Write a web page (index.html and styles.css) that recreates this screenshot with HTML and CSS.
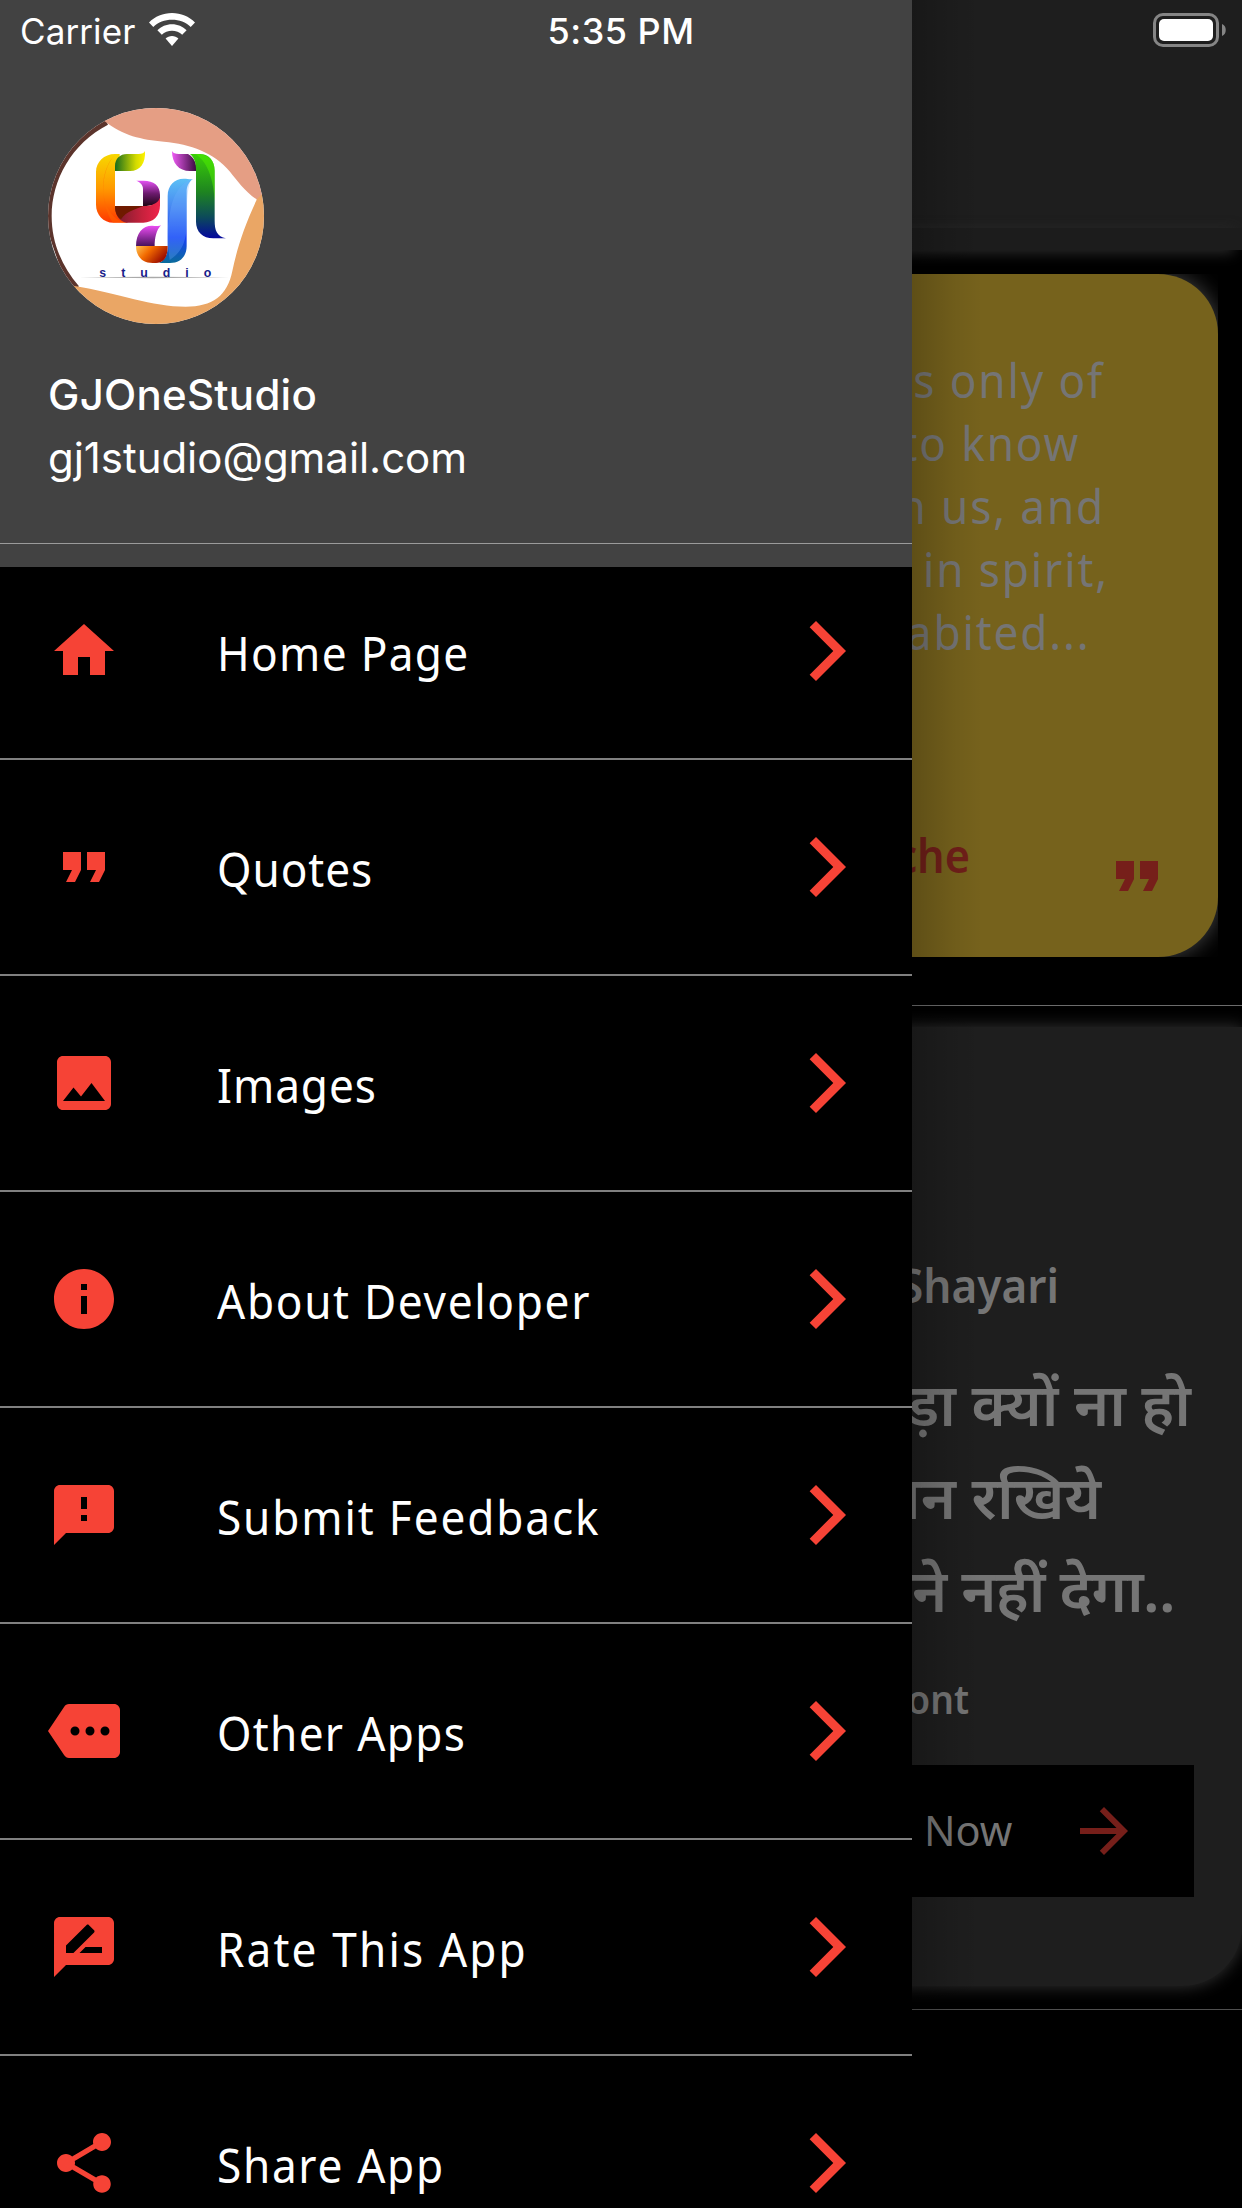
FILE: index.html
```html
<!DOCTYPE html>
<html lang="en">
<head>
<meta charset="utf-8">
<title>GJOneStudio</title>
<link rel="stylesheet" href="styles.css">
</head>
<body>
<svg width="0" height="0" class="defs">
  <symbol id="chevron" viewBox="0 0 24 24"><path d="M5.880 4.120L13.760 12l-7.880 7.880L8 22l10-10L8 2z"/></symbol>
  <symbol id="quote" viewBox="0 0 24 24"><path d="M6 17h3l2-4V7H5v6h3zm8 0h3l2-4V7h-6v6h3z"/></symbol>
</svg>
<div class="screen">
  <div class="status">
    <span class="carrier">Carrier</span>
    <svg class="wifi" viewBox="0 0 46 34"><path d="M23 0C14 0 6 3.500 0 9.500L4.300 14C9.200 9 15.700 6.800 23 6.800S36.800 9 41.700 14L46 9.500C40 3.500 32 0 23 0z"/><path d="M23 11.200c-5.700 0-10.800 2.300-14.600 6l4.400 4.600c2.700-2.600 6.300-4.100 10.200-4.100s7.500 1.500 10.200 4.100l4.400-4.600c-3.800-3.700-8.900-6-14.600-6z"/><path d="M23 23c-2.500 0-4.700 1-6.400 2.500L23 33l6.400-7.500C27.700 24 25.500 23 23 23z"/></svg>
    <span class="time">5:35 PM</span>
    <svg class="battery" viewBox="0 0 74 34"><rect x="1.500" y="1.500" width="63" height="31" rx="8.500" fill="none" stroke="#858585" stroke-width="3"/><rect x="6" y="6" width="54" height="22" rx="5" fill="#fff"/><path d="M69 11c5 1.500 5 10.500 0 12z" fill="#858585"/></svg>
  </div>

  <aside class="drawer">
    <header class="account">
      <svg class="avatar" viewBox="144 324 648 648">
        <defs>
          <clipPath id="disc"><circle cx="468" cy="648" r="324"/></clipPath>
          <linearGradient id="gOrange" x1="0" y1="0" x2="0" y2="1"><stop offset="0" stop-color="#f7d800"/><stop offset=".5" stop-color="#ff9a00"/><stop offset="1" stop-color="#ff3800"/></linearGradient>
          <linearGradient id="gLeaf" x1="0" y1="0" x2="1" y2="0"><stop offset="0" stop-color="#176b1c"/><stop offset=".7" stop-color="#d4db00"/><stop offset="1" stop-color="#fff200"/></linearGradient>
          <linearGradient id="gPurple" x1="0" y1="0" x2="0" y2="1"><stop offset="0" stop-color="#e552f5"/><stop offset=".5" stop-color="#6d1b6f"/><stop offset="1" stop-color="#1f0414"/></linearGradient>
          <linearGradient id="gHook" x1="0" y1="0" x2="0" y2="1"><stop offset="0" stop-color="#ee4df5"/><stop offset="1" stop-color="#421057"/></linearGradient>
          <linearGradient id="gRed" x1="0" y1="0" x2="1" y2="0"><stop offset="0" stop-color="#731b2d"/><stop offset=".6" stop-color="#c6213c"/><stop offset="1" stop-color="#f0244b"/></linearGradient>
          <linearGradient id="gBlue" x1="0" y1="0" x2="0" y2="1"><stop offset="0" stop-color="#5cc0f5"/><stop offset=".35" stop-color="#4786f2"/><stop offset=".7" stop-color="#1740f5"/><stop offset="1" stop-color="#0a6c9b"/></linearGradient>
          <linearGradient id="gFire" x1="0" y1="0" x2="1" y2=".5"><stop offset="0" stop-color="#ffc352"/><stop offset=".45" stop-color="#f26a00"/><stop offset="1" stop-color="#9b0c00"/></linearGradient>
          <linearGradient id="gGreen" x1="0" y1="0" x2="0" y2="1"><stop offset="0" stop-color="#39cf07"/><stop offset=".45" stop-color="#1e8420"/><stop offset=".75" stop-color="#0c4a5a"/><stop offset="1" stop-color="#04079e"/></linearGradient>
          <linearGradient id="gPink" x1="0" y1="0" x2="1" y2="0"><stop offset="0" stop-color="#ef5bf5"/><stop offset="1" stop-color="#3a0b3f"/></linearGradient>
        </defs>
        <g clip-path="url(#disc)">
          <rect x="144" y="324" width="648" height="648" fill="#fff"/>
          <path d="M324 374C215 430 155 540 155 648c0 80 30 150 82 211l-30 20-80-231 40-220 140-90z" fill="#5b342c"/>
          <path d="M312 362c60 46 110 56 180 63 80 8 150 32 198 90 20 25 45 60 81 84l50-40V324H312z" fill="#e59e84"/>
          <path d="M771 597c-40 85-60 150-74 216-15 75-60 107-140 107-100 0-200-40-337-63l-10 130h600V560z" fill="#eaa665"/>
          <path d="M345 462h14v50h-14v106c8 22 14 42 40 50h-45c-30 0-52-24-52-54V516c0-30 24-54 57-54z" fill="url(#gOrange)"/>
          <path d="M345 464c-40 40-48 120-16 170 10 18 28 30 50 34h-40c-36-50-43-150 6-204z" fill="#ff6a00" opacity=".45"/>
          <path d="M345 513v-14c0-23 15-37 36-37h35c10 0 17-3 19-9 2 36-13 60-45 60z" fill="url(#gLeaf)"/>
          <path d="M429 618V566c0-12-10-20-20-24h22c30 0 49 14 49 42v10c0 18-20 24-51 24z" fill="url(#gPurple)"/>
          <path d="M345 618h84c24 0 42-5 51-24v22c0 32-20 52-50 52h-50c-22-4-35-22-35-50z" fill="url(#gRed)"/>
          <path d="M345 618h84c-20 10-50 14-66 40-12-8-18-22-18-40z" fill="#6f1a00"/>
          <path d="M503 740V588c0-32 20-52 48-52 12 0 20 3 28 1-12 8-19 22-19 36v165c0 32-20 51-50 51h-33c18-7 26-26 26-49z" fill="url(#gBlue)"/>
          <path d="M503 690c8-70 15-125 70-153-32 90 20 190-64 243-4-30-8-60-6-90z" fill="#70b0ff" opacity=".3"/>
          <path d="M408 740c0-42 20-63 48-63 10 0 20 3 27-1-14 14-19 38-19 64z" fill="url(#gHook)"/>
          <path d="M408 738h95c0 30-9 51-35 51h-10c-30 0-50-19-50-51z" fill="url(#gFire)"/>
          <path d="M588 513h-18c-34 0-54-23-54-60 4 7 10 9 20 9h28c20 12 27 30 24 51z" fill="url(#gPink)"/>
          <path d="M570 462h30c28 0 44 22 44 50v150c0 30 7 47 34 53h-38c-32 0-52-20-52-50V510c0-20-4-36-18-48z" fill="url(#gGreen)"/>
          <path d="M585 462c35 20 55 70 59 140v-92c0-30-20-48-59-48z" fill="#50ef00" opacity=".5"/>
          <path d="M238 832l220-2 230 2-230 3z" fill="#aaa"/>
          <text x="298" y="832" class="logo-word">studio</text>
        </g>
      </svg>
      <div class="name">GJOneStudio</div>
      <div class="mail">gj1studio@gmail.com</div>
    </header>
    <nav class="menu">
      <a class="item"><svg class="icon" viewBox="0 0 24 24"><path d="M10 20v-6h4v6h5v-8h3L12 3 2 12h3v8z"/></svg><span class="label snug">Home Page</span><svg class="icon"><use href="#chevron"/></svg></a>
      <a class="item"><svg class="icon"><use href="#quote"/></svg><span class="label tight">Quotes</span><svg class="icon"><use href="#chevron"/></svg></a>
      <a class="item"><svg class="icon" viewBox="0 0 24 24"><path d="M21 19V5c0-1.100-.9-2-2-2H5c-1.100 0-2 .9-2 2v14c0 1.100.9 2 2 2h14c1.100 0 2-.9 2-2zM8.500 13.500l2.500 3.010L14.500 12l4.500 6H5l3.500-4.500z"/></svg><span class="label tight">Images</span><svg class="icon"><use href="#chevron"/></svg></a>
      <a class="item"><svg class="icon" viewBox="0 0 24 24"><path d="M12 2C6.480 2 2 6.480 2 12s4.480 10 10 10 10-4.480 10-10S17.520 2 12 2zm1 15h-2v-6h2v6zm0-8h-2V7h2v2z"/></svg><span class="label">About Developer</span><svg class="icon"><use href="#chevron"/></svg></a>
      <a class="item"><svg class="icon" viewBox="0 0 24 24"><path d="M20 2H4c-1.100 0-1.990.9-1.990 2L2 22l4-4h14c1.100 0 2-.9 2-2V4c0-1.100-.9-2-2-2zm-7 12h-2v-2h2v2zm0-4h-2V6h2v4z"/></svg><span class="label loose">Submit Feedback</span><svg class="icon"><use href="#chevron"/></svg></a>
      <a class="item"><svg class="icon" viewBox="0 0 24 24"><path fill-rule="evenodd" d="M22 3H7c-.69 0-1.230.35-1.590.88L0 12l5.410 8.110c.36.53.9.89 1.590.89h15c1.100 0 2-.9 2-2V5c0-1.100-.9-2-2-2zM9 13.500a1.500 1.500 0 1 1 0-3 1.500 1.500 0 0 1 0 3zm5 0a1.500 1.500 0 1 1 0-3 1.500 1.500 0 0 1 0 3zm5 0a1.500 1.500 0 1 1 0-3 1.500 1.500 0 0 1 0 3z"/></svg><span class="label snug">Other Apps</span><svg class="icon"><use href="#chevron"/></svg></a>
      <a class="item"><svg class="icon" viewBox="0 0 24 24"><path fill-rule="evenodd" d="M20 2H4c-1.100 0-1.990.9-1.990 2L2 22l4-4h14c1.100 0 2-.9 2-2V4c0-1.100-.9-2-2-2zM6 14v-2.470l6.880-6.880c.2-.2.51-.2.71 0l1.770 1.770c.2.2.2.51 0 .71L8.470 14H6zm12 0h-7.500l2-2H18v2z"/></svg><span class="label wide">Rate This App</span><svg class="icon"><use href="#chevron"/></svg></a>
      <a class="item"><svg class="icon" viewBox="0 0 24 24"><path d="M18 16.080c-.76 0-1.440.3-1.960.77L8.910 12.700c.05-.23.09-.46.09-.7s-.04-.47-.09-.7l7.050-4.110c.54.5 1.250.81 2.040.81 1.660 0 3-1.340 3-3s-1.340-3-3-3-3 1.340-3 3c0 .24.04.47.09.7L8.040 9.810C7.500 9.310 6.790 9 6 9c-1.660 0-3 1.340-3 3s1.340 3 3 3c.79 0 1.500-.31 2.040-.81l7.120 4.160c-.05.21-.08.43-.08.65 0 1.610 1.310 2.920 2.920 2.920s2.920-1.310 2.920-2.920-1.310-2.920-2.920-2.920z"/></svg><span class="label">Share App</span><svg class="icon"><use href="#chevron"/></svg></a>
    </nav>
  </aside>

  <main class="page">
    <div class="appbar"></div>
    <div class="strip"></div>
    <div class="frame">
      <section class="quote-card">
        <p class="quote-text"><span class="l1">s only of</span><span class="l2">to know</span><span class="l3">n us, and</span><span class="l4">in spirit,</span><span class="l5">abited...</span></p>
        <div class="quote-foot"><span class="author">che</span><svg class="icon dim"><use href="#quote"/></svg></div>
      </section>
    </div>
    <hr class="rule">
    <section class="shayari-card">
      <h2 class="shayari-title">Shayari</h2>
      <p class="verse" lang="hi"><span class="v1">ड़ा क्यों ना हो</span><span class="v2">ान रखिये</span><span class="v3">ने नहीं देगा..</span></p>
      <div class="font-name">ont</div>
      <div class="button"><span class="now">Now</span><svg class="icon dim" viewBox="0 0 24 24"><path d="M12 4l-1.410 1.410L16.170 11H4v2h12.170l-5.580 5.590L12 20l8-8z"/></svg></div>
    </section>
    <hr class="rule">
  </main>
</div>
</body>
</html>
```
FILE: styles.css
```css
* { box-sizing: border-box; }
body { margin: 0; background: #000; }
.defs { position: absolute; }
.screen {
  position: relative;
  width: 1242px;
  height: 2208px;
  overflow: hidden;
  display: grid;
  grid-template-columns: 912px 330px;
  background: #000;
  color: #fff;
}

/* Status bar over the drawer and the page */
.status {
  position: absolute;
  inset: 0 0 auto 0;
  z-index: 3;
  height: 60px;
  padding: 13px 16px 0 20px;
  display: flex;
  align-items: flex-start;
  font: 400 35px/36px Inter, sans-serif;
}
.carrier { width: 129px; letter-spacing: 0.1px; }
.wifi { width: 46px; height: 34px; fill: #fff; }
.time { width: 160px; margin-left: 346px; text-align: center; font-weight: 500; font-size: 36px; letter-spacing: 0.5px; }
.battery { width: 74px; height: 34px; margin-left: auto; flex: none; position: relative; left: 1px; }

/* Drawer */
.drawer { height: 2208px; overflow: hidden; background: #000; }
.account {
  height: 567px;
  padding: 108px 48px 0;
  background: linear-gradient(#9b9b9b, #9b9b9b) 0 543px / 100% 1px no-repeat #424242;
  font-family: Inter, sans-serif;
  font-size: 42px;
}
.avatar { display: block; width: 216px; height: 216px; }
.logo-word { font: 700 37px "Liberation Sans", sans-serif; letter-spacing: 45px; fill: #17208a; }
.name { margin-top: 39px; line-height: 64px; font-weight: 500; letter-spacing: 0.25px; }
.mail { line-height: 62px; letter-spacing: -0.05px; }
.item {
  height: 216px;
  padding: 0 48px;
  display: flex;
  align-items: center;
  border-bottom: 2px solid #808080;
}
.item:first-child { height: 193px; padding-bottom: 23px; }
.icon { width: 72px; height: 72px; flex: none; fill: #f64336; }
.label {
  flex: 1;
  margin-left: 97px;
  padding-top: 3px;
  font: 430 47.5px/60px "Noto Sans", sans-serif;
  letter-spacing: 1.8px;
  white-space: nowrap;
  transform: scaleX(0.93);
  transform-origin: left;
}
.label.tight { letter-spacing: 1px; }
.label.snug { letter-spacing: 1.4px; }
.label.loose { letter-spacing: 2px; }
.label.wide { letter-spacing: 2.3px; }

/* Page behind the drawer */
.page { position: relative; height: 2208px; overflow: hidden; color: #757575; font-family: "Noto Sans", sans-serif; }
.page::after {
  content: "";
  position: absolute;
  inset: 0 auto 0 0;
  width: 70px;
  background: linear-gradient(90deg, rgba(0,0,0,.2), rgba(0,0,0,.06) 60%, transparent);
}
.appbar { height: 228px; background: #1e1e1e; }
.strip { height: 22px; margin-left: -40px; background: #1c1c1c; box-shadow: -8px 3px 14px #2b2b2b; }
.frame { width: 306px; height: 683px; margin-top: 24px; overflow: hidden; }
.quote-card {
  height: 683px;
  margin-left: -60px;
  padding: 74px 0 0 60px;
  border-radius: 60px;
  background: #76621c;
  box-shadow: 0 0 22px #484848;
}
.quote-text, .verse { margin: 0; display: flex; flex-direction: column; align-items: flex-end; white-space: nowrap; }
.quote-text { height: 390px; font-size: 47.5px; font-weight: 430; line-height: 63px; letter-spacing: 2px; }
.quote-text span { transform: scaleX(0.93); transform-origin: right; }
.l1 { margin-right: 114px; }
.l2 { margin-right: 138px; }
.l3 { margin-right: 113px; }
.l4 { margin-right: 109px; }
.l5 { margin-right: 128px; }
.quote-foot { display: flex; height: 180px; align-items: flex-start; justify-content: space-between; padding-right: 45px; }
.author { width: 58px; margin-top: 85px; display: flex; justify-content: flex-end; font-weight: 600; font-size: 47px; line-height: 64px; color: #701f19; transform: scaleX(0.92); transform-origin: right; }
.quote-foot .icon { margin-top: 102px; }
.icon.dim { fill: #761f1a; }
.rule { height: 1px; margin: 48px 0 0; border: 0; background: #6c6c6c; }
.shayari-card {
  height: 959px;
  margin: 21px 0 0 -60px;
  padding: 226px 48px 0 60px;
  border-radius: 0 0 60px 0;
  background: #1e1e1e;
  box-shadow: 0 0 16px 1px #303030;
}
.shayari-card + .rule { margin-top: 23px; background: #4f4f4f; }
.shayari-title { width: 147px; height: 64px; margin: 0; display: flex; justify-content: flex-end; font-size: 47.5px; font-weight: 600; line-height: 64px; transform: scaleX(0.93); transform-origin: right; }
.verse { height: 279px; margin-top: 48px; font: 600 59.5px/93px "Noto Sans Devanagari", "Noto Sans", sans-serif; }
.v1 { margin-right: 3px; }
.v2 { margin-right: 93px; }
.v3 { margin-right: 19px; letter-spacing: -0.7px; }
.font-name { width: 57px; height: 56px; margin-top: 27px; display: flex; justify-content: flex-end; font-size: 40px; line-height: 56px; font-weight: 600; transform: scaleX(0.93); transform-origin: right; }
.button { height: 132px; margin-top: 38px; padding: 0 54px 0 12px; display: flex; align-items: center; justify-content: space-between; background: #000; }
.now { padding-bottom: 2px; font: 400 41.5px/60px "Noto Sans", sans-serif; }
```
